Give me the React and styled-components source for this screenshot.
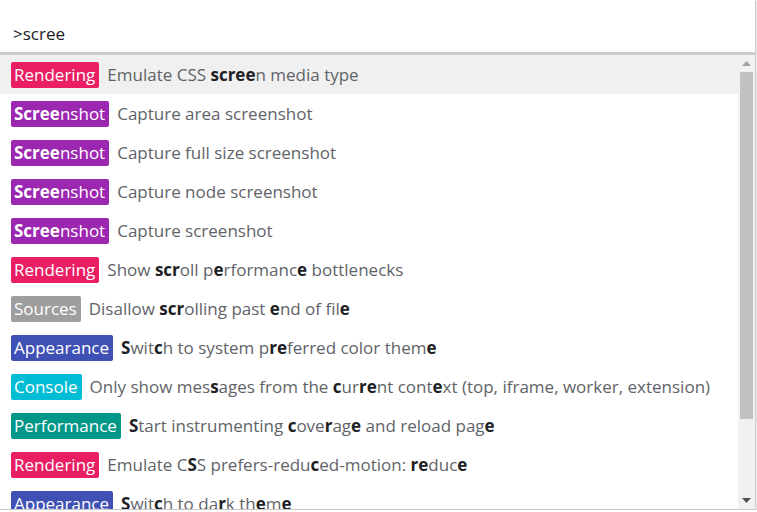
import styled, { createGlobalStyle } from "styled-components";

const GlobalStyle = createGlobalStyle`
    html, body {
        margin: 0;
        padding: 0;
        background: #ffffff;
    }
    body {
        font-family: "Open Sans", "Noto Sans", sans-serif;
    }
`;

const Palette = styled.div`
    width: 755px;
    height: 509px;
    display: flex;
    flex-direction: column;
    background: #ffffff;
    border-right: 1px solid #d0d0d0;
    border-bottom: 1px solid #c8c8c8;
    box-shadow: 1px 1px 2px rgba(0, 0, 0, 0.15);
    overflow: hidden;
`;

const Prompt = styled.div`
    height: 55px;
    flex: none;
    display: flex;
    align-items: center;
    padding: 14px 0 0 13px;
    box-sizing: border-box;
    font-size: 17px;
    color: #202124;
    border-bottom: 3px solid #cccccc;
`;

const Body = styled.div`
    flex: 1;
    display: flex;
    min-height: 0;
`;

const List = styled.div`
    flex: 1;
    overflow: hidden;
`;

const Row = styled.div`
    height: 39px;
    display: flex;
    align-items: center;
    gap: 8px;
    padding-left: 11px;
    background: ${(p) => (p.$active ? "#f0f0f0" : "transparent")};
    white-space: nowrap;
`;

const Badge = styled.span`
    display: inline-block;
    height: 26px;
    line-height: 26px;
    padding: 0 4px 0 3px;
    border-radius: 2px;
    font-size: 17px;
    color: #ffffff;
    background: ${(p) => p.$color};
`;

const Title = styled.span`
    font-size: 17px;
    color: #5f6368;
`;

const Match = styled.b`
    font-weight: 700;
    color: ${(p) => (p.$light ? "#ffffff" : "#202124")};
`;

const Scrollbar = styled.div`
    width: 17px;
    flex: none;
    background: #f1f1f1;
    display: flex;
    flex-direction: column;
    align-items: center;
`;

const Arrow = styled.div`
    height: 17px;
    flex: none;
    display: flex;
    align-items: center;
    justify-content: center;
`;

const Track = styled.div`
    flex: 1;
    width: 13px;
`;

const Thumb = styled.div`
    width: 13px;
    height: 347px;
    background: #c1c1c1;
`;

const COLORS = {
    Rendering: "#e91e63",
    Screenshot: "#9c27b0",
    Sources: "#9e9e9e",
    Appearance: "#3f51b5",
    Console: "#00bcd4",
    Performance: "#009688",
};

const items = [
    ["Rendering", "Emulate CSS [scree]n media type"],
    ["[Scree]nshot", "Capture area screenshot"],
    ["[Scree]nshot", "Capture full size screenshot"],
    ["[Scree]nshot", "Capture node screenshot"],
    ["[Scree]nshot", "Capture screenshot"],
    ["Rendering", "Show [scr]oll p[e]rformanc[e] bottlenecks"],
    ["Sources", "Disallow [scr]olling past [e]nd of fil[e]"],
    ["Appearance", "[S]wit[c]h to system p[re]ferred color them[e]"],
    ["Console", "Only show mes[s]ages from the [c]ur[re]nt cont[e]xt (top, iframe, worker, extension)"],
    ["Performance", "[S]tart instrumenting [c]ove[r]ag[e] and reload pag[e]"],
    ["Rendering", "Emulate C[S]S prefers-redu[c]ed-motion: [re]duc[e]"],
    ["Appearance", "[S]wit[c]h to da[r]k th[e]m[e]"],
];

// "[abc]" marks the matched characters
function Highlighted({ text, light }) {
    const parts = text.split(/(\[[^\]]+\])/).filter(Boolean);
    return parts.map((part, i) =>
        part.startsWith("[") ? (
            <Match key={i} $light={light}>
                {part.slice(1, -1)}
            </Match>
        ) : (
            <span key={i}>{part}</span>
        )
    );
}

function App() {
    return (
        <>
            <GlobalStyle />
            <Palette>
                <Prompt>&gt;scree</Prompt>
                <Body>
                    <List>
                        {items.map(([category, title], i) => (
                            <Row key={i} $active={i === 0}>
                                <Badge $color={COLORS[category.replace(/[\[\]]/g, "")]}>
                                    <Highlighted text={category} light />
                                </Badge>
                                <Title>
                                    <Highlighted text={title} />
                                </Title>
                            </Row>
                        ))}
                    </List>
                    <Scrollbar>
                        <Arrow>
                            <svg width="9" height="5" viewBox="0 0 9 5">
                                <path d="M0 5 L4.5 0 L9 5 Z" fill="#a3a3a3" />
                            </svg>
                        </Arrow>
                        <Track>
                            <Thumb />
                        </Track>
                        <Arrow>
                            <svg width="9" height="5" viewBox="0 0 9 5">
                                <path d="M0 0 L4.5 5 L9 0 Z" fill="#505050" />
                            </svg>
                        </Arrow>
                    </Scrollbar>
                </Body>
            </Palette>
        </>
    );
}

export default App;
